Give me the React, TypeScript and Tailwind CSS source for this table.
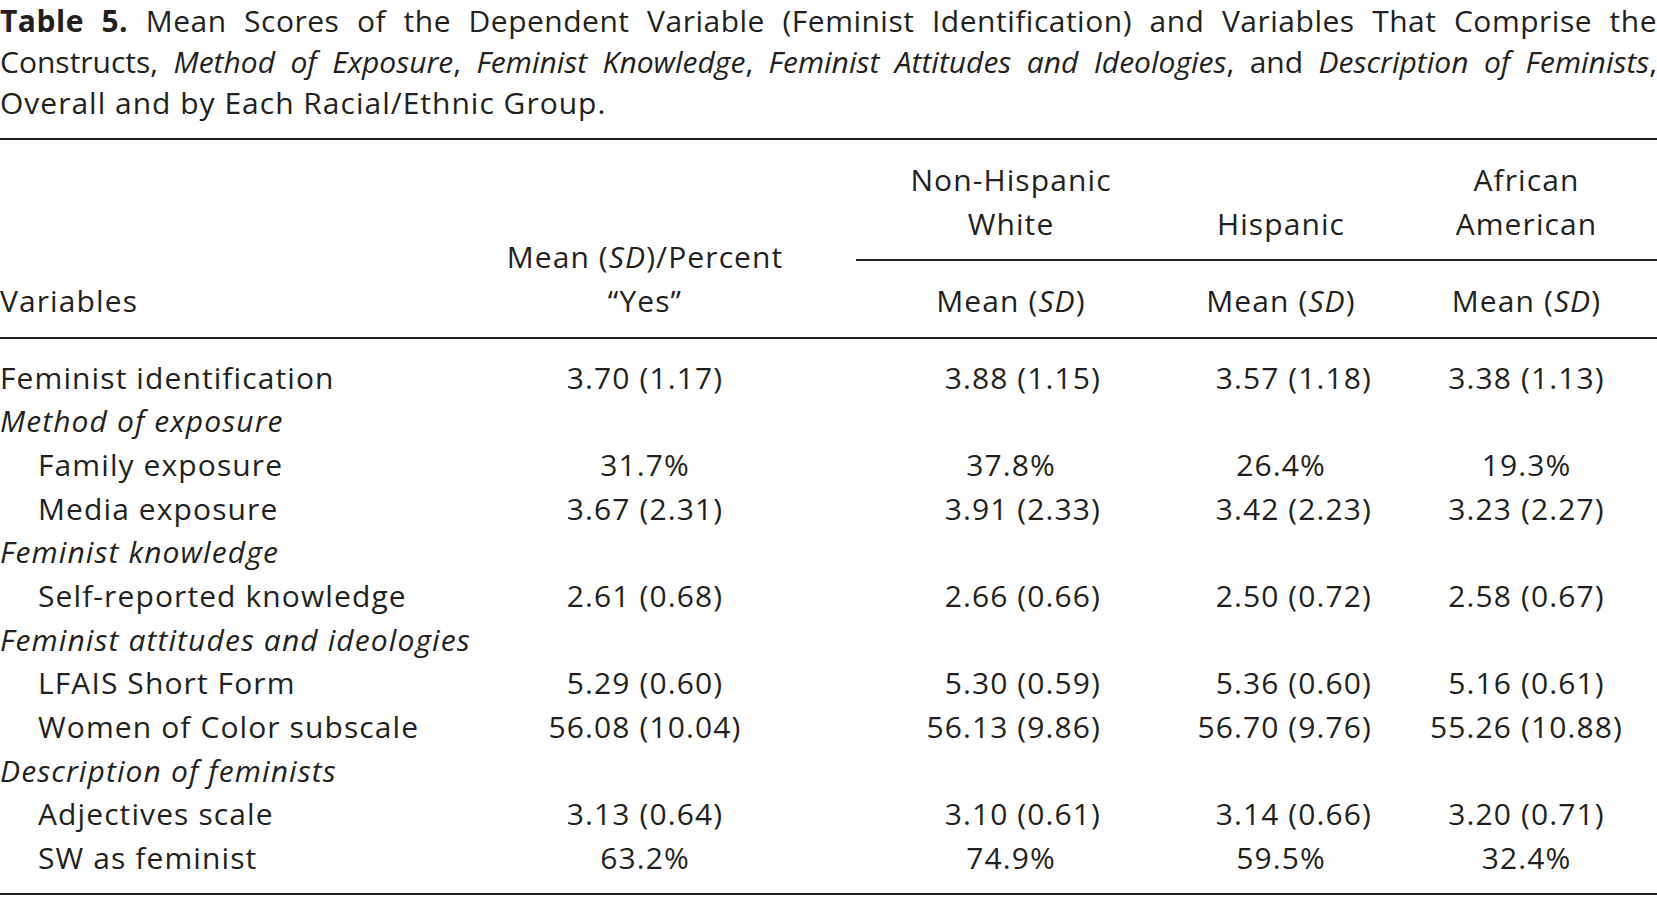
import React from "react";

type Row = {
  label: string;
  kind: "main" | "section" | "sub";
  v?: string[];
  pct?: boolean;
};

const rows: Row[] = [
  { label: "Feminist identification", kind: "main", v: ["3.70 (1.17)", "3.88 (1.15)", "3.57 (1.18)", "3.38 (1.13)"] },
  { label: "Method of exposure", kind: "section" },
  { label: "Family exposure", kind: "sub", v: ["31.7%", "37.8%", "26.4%", "19.3%"], pct: true },
  { label: "Media exposure", kind: "sub", v: ["3.67 (2.31)", "3.91 (2.33)", "3.42 (2.23)", "3.23 (2.27)"] },
  { label: "Feminist knowledge", kind: "section" },
  { label: "Self-reported knowledge", kind: "sub", v: ["2.61 (0.68)", "2.66 (0.66)", "2.50 (0.72)", "2.58 (0.67)"] },
  { label: "Feminist attitudes and ideologies", kind: "section" },
  { label: "LFAIS Short Form", kind: "sub", v: ["5.29 (0.60)", "5.30 (0.59)", "5.36 (0.60)", "5.16 (0.61)"] },
  { label: "Women of Color subscale", kind: "sub", v: ["56.08 (10.04)", "56.13 (9.86)", "56.70 (9.76)", "55.26 (10.88)"] },
  { label: "Description of feminists", kind: "section" },
  { label: "Adjectives scale", kind: "sub", v: ["3.13 (0.64)", "3.10 (0.61)", "3.14 (0.66)", "3.20 (0.71)"] },
  { label: "SW as feminist", kind: "sub", v: ["63.2%", "74.9%", "59.5%", "32.4%"], pct: true },
];

const grid = "grid grid-cols-[500px_356px_310px_230px_261px]";

function MeanSD() {
  return (
    <>
      Mean (<i>SD</i>)
    </>
  );
}

export default function App() {
  return (
    <div className="w-[1657px] h-[897px] bg-white text-[#231f20] font-['Open_Sans',sans-serif] text-[30px] tracking-[1.1px] overflow-hidden">
      {/* caption */}
      <div className="leading-[41px] whitespace-nowrap">
        <div className="tracking-[0.5px] [text-align-last:justify]">
          <b>Table 5.</b> Mean Scores of the Dependent Variable (Feminist Identification) and Variables That Comprise the
        </div>
        <div className="tracking-[0px] [text-align-last:justify]">
          Constructs, <i>Method of Exposure</i>, <i>Feminist Knowledge</i>, <i>Feminist Attitudes and Ideologies</i>, and{" "}
          <i>Description of Feminists</i>,
        </div>
        <div className="tracking-[1px]">Overall and by Each Racial/Ethnic Group.</div>
      </div>

      <div className="mt-[14.5px] border-t-2 border-b-2 border-[#231f20]">
        {/* header */}
        <div className={`${grid} grid-rows-[auto_auto] border-b-2 border-[#231f20] leading-[43.6px]`}>
          <div className="row-span-2 flex items-end pb-[15px]">Variables</div>
          <div className="row-span-2 flex items-end justify-center pb-[15px] pr-[66px] text-center">
            <div>
              Mean (<i>SD</i>)/Percent
              <br />
              “Yes”
            </div>
          </div>
          <div className="pt-[18.5px] pb-[13.5px] border-b-2 border-[#231f20] text-center">
            Non-Hispanic
            <br />
            White
          </div>
          <div className="pt-[18.5px] pb-[13.5px] border-b-2 border-[#231f20] flex items-end justify-center">
            Hispanic
          </div>
          <div className="pt-[18.5px] pb-[13.5px] border-b-2 border-[#231f20] text-center">
            African
            <br />
            American
          </div>
          <div className="pt-[18px] pb-[15px] text-center">
            <MeanSD />
          </div>
          <div className="pt-[18px] pb-[15px] text-center">
            <MeanSD />
          </div>
          <div className="pt-[18px] pb-[15px] text-center">
            <MeanSD />
          </div>
        </div>

        {/* body */}
        <div className="pt-[16.5px] pb-[13px] leading-[43.65px]">
          {rows.map((r) => (
            <div key={r.label} className={grid}>
              <div className={r.kind === "sub" ? "pl-[38px] whitespace-nowrap" : "whitespace-nowrap"}>
                {r.kind === "section" ? <i>{r.label}</i> : r.label}
              </div>
              {r.v ? (
                <>
                  <div className="pr-[66px] text-center whitespace-nowrap">{r.v[0]}</div>
                  <div className={r.pct ? "text-center" : "pr-[65px] text-right whitespace-nowrap"}>{r.v[1]}</div>
                  <div className={r.pct ? "text-center" : "pr-[24px] text-right whitespace-nowrap"}>{r.v[2]}</div>
                  <div className="text-center whitespace-nowrap">{r.v[3]}</div>
                </>
              ) : null}
            </div>
          ))}
        </div>
      </div>
    </div>
  );
}
